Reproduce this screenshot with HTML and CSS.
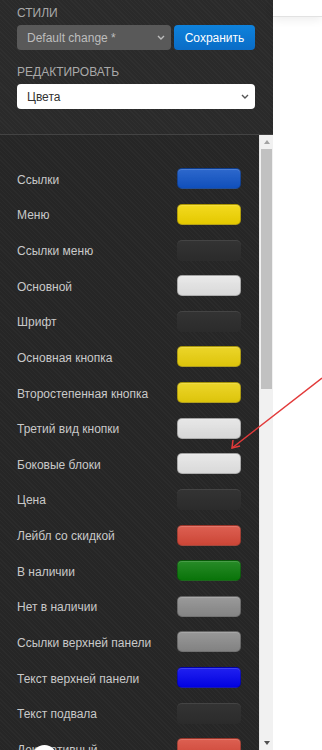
FILE: index.html
```html
<!DOCTYPE html>
<html lang="ru">
<head>
    <meta charset="UTF-8">
    <meta name="viewport" content="width=device-width, initial-scale=1.0">
    <title>Редактор стилей</title>
    <link rel="stylesheet" href="styles.css">
</head>
<body>
    <div class = "layout_main">
        <aside class = "panel_side">
            <div class = "panel_top">
                <div class = "label_field">Стили</div>
                <div class = "row_styles">
                    <div class = "wrap_select wrap_select_dark">
                        <select class = "select_field select_dark">
                            <option>Default change *</option>
                        </select>
                        <svg class = "icon_chevron" width="8" height="5" viewBox="0 0 8 5"><path d="M1 1 L4 4 L7 1" fill="none" stroke="#bdbdbd" stroke-width="1.4"/></svg>
                    </div>
                    <button class = "btn_save">Сохранить</button>
                </div>

                <div class = "label_field label_edit">Редактировать</div>
                <div class = "wrap_select">
                    <select class = "select_field select_light">
                        <option>Цвета</option>
                    </select>
                    <svg class = "icon_chevron" width="8" height="5" viewBox="0 0 8 5"><path d="M1 1 L4 4 L7 1" fill="none" stroke="#555" stroke-width="1.4"/></svg>
                </div>
            </div>

            <div class = "section_list">
                <div class = "list_colors" id = "list_colors"></div>
                <div class = "bar_scroll">
                    <div class = "arrow_scroll arrow_up"></div>
                    <div class = "track_scroll"><div class = "thumb_scroll"></div></div>
                    <div class = "arrow_scroll arrow_down"></div>
                </div>
            </div>
        </aside>

        <main class = "area_content">
            <div class = "bar_top"></div>
        </main>
    </div>

    <svg class = "mark_arrow" width="100" height="80" viewBox="0 0 100 80">
        <path d="M98 8 L8 78" stroke="#e23a3a" stroke-width="1.5" fill="none"/>
        <path d="M9 70 L8 78 L16 76" stroke="#e23a3a" stroke-width="1.5" fill="none"/>
    </svg>
    <div class = "mark_cursor"></div>

    <script>
        document.addEventListener('DOMContentLoaded', function() {
            const colors = [
                ['Ссылки', '#1154c6'],
                ['Меню', '#f2d500'],
                ['Ссылки меню', 'dark'],
                ['Основной', '#e6e6e6'],
                ['Шрифт', 'dark'],
                ['Основная кнопка', '#ead00c'],
                ['Второстепенная кнопка', '#ead00c'],
                ['Третий вид кнопки', '#e4e4e4'],
                ['Боковые блоки', '#e6e6e6'],
                ['Цена', 'dark'],
                ['Лейбл со скидкой', '#d84a3a'],
                ['В наличии', '#0a7b0a'],
                ['Нет в наличии', '#8c8c8c'],
                ['Ссылки верхней панели', '#8a8a8a'],
                ['Текст верхней панели', '#0202ee'],
                ['Текст подвала', 'dark'],
                ['Декоративный', '#d84a3a']
            ];

            let html = '';
            colors.forEach(item => {
                const swatch = item[1] === 'dark'
                    ? '<span class="swatch_color swatch_dark"></span>'
                    : `<span class="swatch_color" style="background-color: ${item[1]}"></span>`;
                html += `<div class="row_color"><span class="name_color">${item[0]}</span>${swatch}</div>`;
            });
            document.getElementById('list_colors').innerHTML = html;
        });
    </script>
</body>
</html>
```

FILE: styles.css
```css
body 
{
    font-family: 'Liberation Sans', Arial, sans-serif;
    margin: 0;
    padding: 0;
    background-color: #fff;
    height: 750px;
    overflow: hidden;
    position: relative;
}

.layout_main 
{
    display: flex;
    height: 750px;
}

.panel_side 
{
    width: 273px;
    display: flex;
    flex-direction: column;
    flex-shrink: 0;
}

.panel_top 
{
    height: 135px;
    box-sizing: border-box;
    padding: 6px 18px 0 17px;
    background-color: #2a2a2a;
    background-image: repeating-linear-gradient(45deg, rgba(255,255,255,0.025) 0 1px, transparent 1px 3px);
    border-bottom: 1px solid #434343;
}

.label_field 
{
    font-size: 12px;
    line-height: 14px;
    color: #a9a9a9;
    text-transform: uppercase;
    margin-bottom: 5px;
}

.label_edit { margin-top: 15px; }

.row_styles 
{
    display: flex;
    gap: 3px;
}

.wrap_select 
{
    position: relative;
    height: 25px;
}

.wrap_select_dark { width: 154px; }

.select_field 
{
    appearance: none;
    -webkit-appearance: none;
    width: 100%;
    height: 25px;
    margin: 0;
    padding: 0 20px 0 10px;
    border: none;
    border-radius: 4px;
    font-family: 'Liberation Sans', Arial, sans-serif;
    font-size: 12px;
    outline: none;
}

.select_dark 
{
    background-color: #595959;
    color: #bdbdbd;
}

.select_light 
{
    background-color: #fff;
    color: #333;
}

.icon_chevron 
{
    position: absolute;
    right: 6px;
    top: 10px;
}

.btn_save 
{
    width: 81px;
    height: 25px;
    border: none;
    border-radius: 4px;
    background: linear-gradient(#0e82dc, #0a6cc6);
    color: #fff;
    font-family: 'Liberation Sans', Arial, sans-serif;
    font-size: 12px;
    padding: 0;
    cursor: pointer;
}

.section_list 
{
    flex: 1;
    display: flex;
    min-height: 0;
}

.list_colors 
{
    width: 259px;
    box-sizing: border-box;
    padding-top: 26px;
    background-color: #262626;
    background-image: repeating-linear-gradient(45deg, rgba(255,255,255,0.025) 0 1px, transparent 1px 3px);
    overflow: hidden;
}

.row_color 
{
    height: 35.625px;
    display: flex;
    align-items: center;
    justify-content: space-between;
    padding: 0 18px 0 17px;
}

.name_color 
{
    font-size: 12px;
    color: #c9c9c9;
    padding-top: 2px;
}

.swatch_color 
{
    width: 64px;
    height: 21px;
    box-sizing: border-box;
    border-radius: 5px;
    border: 1px solid rgba(0,0,0,0.25);
    background-image: linear-gradient(rgba(255,255,255,0.12), rgba(0,0,0,0.06));
    box-shadow: inset 0 1px 0 rgba(255,255,255,0.15);
}

.swatch_dark 
{
    background-color: #2e2e2e;
    border: none;
    border-top: 1px solid #444;
    background-image: linear-gradient(#333, #2b2b2b);
    box-shadow: none;
}

.bar_scroll 
{
    width: 14px;
    display: flex;
    flex-direction: column;
    background-color: #f1f1f1;
    border-left: 1px solid #e6e6e6;
    box-sizing: border-box;
}

.arrow_scroll 
{
    height: 14px;
    display: flex;
    align-items: center;
    justify-content: center;
}

.arrow_up::before 
{
    content: "";
    border-left: 3px solid transparent;
    border-right: 3px solid transparent;
    border-bottom: 4px solid #a3a3a3;
}

.arrow_down::before 
{
    content: "";
    border-left: 3px solid transparent;
    border-right: 3px solid transparent;
    border-top: 4px solid #505050;
}

.track_scroll 
{
    flex: 1;
    padding: 0 1px;
}

.thumb_scroll 
{
    height: 240px;
    background-color: #c1c1c1;
}

.area_content 
{
    flex: 1;
    background-color: #fff;
}

.bar_top 
{
    height: 16px;
    border-bottom: 1px solid #e2e2e2;
    box-shadow: 0 3px 10px rgba(0,0,0,0.07);
}

.mark_arrow 
{
    position: absolute;
    left: 224px;
    top: 370px;
}

.mark_cursor 
{
    position: absolute;
    left: 32px;
    top: 745px;
    width: 25px;
    height: 25px;
    border-radius: 50%;
    background-color: #fff;
}
```
